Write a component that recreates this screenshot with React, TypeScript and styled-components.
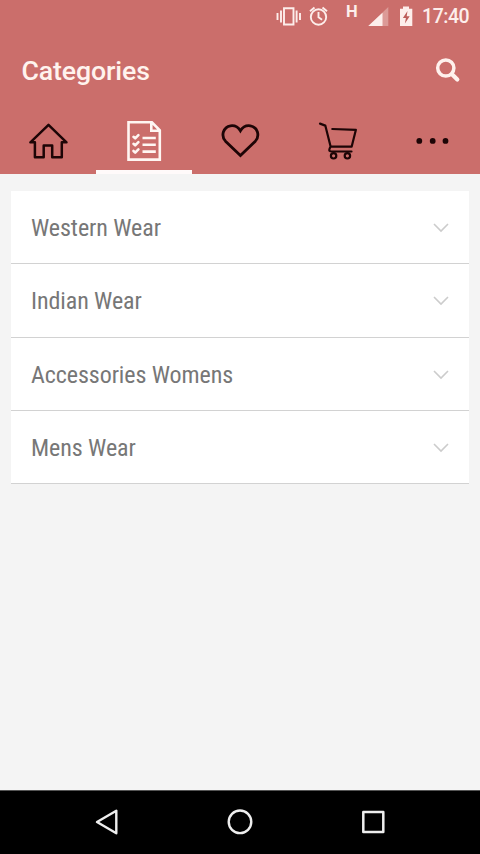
import React from "react";
import styled, { createGlobalStyle } from "styled-components";

const GlobalStyle = createGlobalStyle`
  * { box-sizing: border-box; }
  body { margin: 0; background: #f4f4f4; font-family: Roboto, "Liberation Sans", sans-serif; }
  svg { display: block; flex: none; }
`;

const Screen = styled.div`
  width: 480px;
  height: 854px;
  display: flex;
  flex-direction: column;
  overflow: hidden;
  background: #f4f4f4;
`;

const Header = styled.header`
  height: 174px;
  flex: none;
  background: #cb6e6b;
`;

const StatusBar = styled.div`
  height: 34px;
  display: flex;
  justify-content: flex-end;
  padding-right: 11px;
  color: #fdeeeb;
`;

const Clock = styled.span`
  width: 47px;
  margin-left: 9px;
  font-size: 19.5px;
  font-weight: 500;
  line-height: 34px;
  white-space: nowrap;
  letter-spacing: -0.45px;
`;

const NetworkType = styled.span`
  width: 12px;
  margin-left: 16px;
  font-size: 16.5px;
  line-height: 24px;
  font-weight: 700;
`;

const TitleBar = styled.div`
  height: 74px;
  display: flex;
  align-items: center;
  justify-content: space-between;
  padding: 0 19px 0 21.5px;
`;

const Title = styled.h1`
  margin: 0;
  font-size: 26.7px;
  font-weight: 500;
  letter-spacing: -0.12px;
  line-height: 32px;
  color: #fff3ee;
`;

const SearchButton = styled.button`
  border: 0;
  padding: 0;
  background: none;
`;

const Tabs = styled.nav`
  height: 66px;
  display: grid;
  grid-template-columns: repeat(5, 96px);
`;

const Tab = styled.button<{ $active?: boolean }>`
  height: 66px;
  padding: 0;
  border: 0;
  background: none;
  color: ${(p) => (p.$active ? "#fff6f2" : "#1d0506")};
  box-shadow: ${(p) => (p.$active ? "inset 0 -4px #fffafa" : "none")};
`;

const CategoryList = styled.main`
  flex: 1;
  padding: 17px 11px 0;
`;

const CategoryRow = styled.div`
  height: 73.3px;
  display: flex;
  align-items: center;
  justify-content: space-between;
  padding: 2px 20px 0;
  background: #fff;
  border-bottom: 1px solid #d2d2d2;
`;

const CategoryName = styled.span`
  font-family: "Roboto Condensed", Roboto, sans-serif;
  font-stretch: 75%;
  font-size: 24px;
  letter-spacing: -0.08px;
  line-height: 30px;
  color: #777;
`;

const NavBar = styled.footer`
  height: 64px;
  flex: none;
  display: flex;
  align-items: center;
  justify-content: space-between;
  padding: 0 91px 1px;
  background: #000;
  border-top: 1px solid #555;
`;

const categories = ["Western Wear", "Indian Wear", "Accessories Womens", "Mens Wear"];

const TabIcon = ({ x, width = 2.2, children }: { x: number; width?: number; children: React.ReactNode }) => (
  <svg width="96" height="66" viewBox={`${x} 108 96 66`} fill="none" stroke="currentColor" strokeWidth={width} strokeLinejoin="round" strokeLinecap="round">
    {children}
  </svg>
);

export default function App() {
  return (
    <>
      <GlobalStyle />
      <Screen>
        <Header>
          <StatusBar>
            <svg width="26" height="34" viewBox="276 0 26 34" fill="none" stroke="currentColor" strokeWidth="1.9">
              <path d="M284 8.3h9.5v16.2H284zM281 10.5v12M296.6 10.5v12M277.5 13v7M300 13v7" />
            </svg>
            <svg width="28" height="34" viewBox="302 0 28 34" fill="none" stroke="currentColor" strokeWidth="1.9">
              <circle cx="318.5" cy="17" r="7.7" />
              <path d="M318.5 12v5.3l3.6 2.5M310 11.2l4.5-3.8M322.5 7.4l4.5 3.8" />
            </svg>
            <NetworkType>H</NetworkType>
            <svg width="31" height="34" viewBox="358 0 31 34" fill="currentColor">
              <path opacity=".35" d="M388.3 7v19h-20z" />
              <path d="M382.5 12.7V26h-14.2z" />
            </svg>
            <svg width="24" height="34" viewBox="389 0 24 34">
              <path fill="currentColor" d="M400 8.7h3V6.5h6v2.2h3.3V26H400z" />
              <path fill="#bd5c59" d="M407.5 11l-4.6 7h3l-1 5.6 4.8-7.3h-3z" />
            </svg>
            <Clock>17:40</Clock>
          </StatusBar>
          <TitleBar>
            <Title>Categories</Title>
            <SearchButton aria-label="Search">
              <svg width="26" height="26" viewBox="435 58 26 26" fill="none" stroke="#fff1ed" strokeLinecap="round">
                <circle cx="445.8" cy="68" r="8.1" strokeWidth="3.5" />
                <path d="M452 74.2l5.3 5.3" strokeWidth="4.2" />
              </svg>
            </SearchButton>
          </TitleBar>
          <Tabs>
            <Tab aria-label="Home">
              <TabIcon x={0} width={2.5}>
                <path d="M48.5 124.9L30.4 142.3h4.5v14.9h8.8v-11.6h8.5v11.6h9.6v-14.9h4.7z" />
              </TabIcon>
            </Tab>
            <Tab $active aria-label="Categories">
              <TabIcon x={96} width={2.6}>
                <path strokeLinejoin="miter" d="M128.5 122.3h23.4l7.9 8v29.3h-31.3zM151.3 122.5v8.3h8.3" />
                <path strokeLinecap="butt" d="M142.5 138h13.3M142.5 144.7h13.3M142.5 151.6h13.3" />
                <path d="M133.5 136.8l1.7 1.6 3.2-3.2M133.5 143.8l1.7 1.6 3.2-3.2M133.5 151l1.7 1.6 3.2-3.2" />
              </TabIcon>
            </Tab>
            <Tab aria-label="Wishlist">
              <TabIcon x={192} width={2.8}>
                <path strokeLinejoin="miter" d="M240.4 155.5L225.5 141.2C220.5 135.5 223.4 127 230.5 125.8c4.4-.6 7.8 1.5 9.9 5 2.1-3.5 5.5-5.6 9.9-5 7.1 1.2 10 9.7 5 15.4z" />
              </TabIcon>
            </Tab>
            <Tab aria-label="Cart">
              <TabIcon x={288} width={2.2}>
                <path d="M320 123.6l5.3 2 5.3 21H351.7l4.2-16.8-23.6-.8M330.5 146.7c-2.6 4.6-.6 4.8 2 4.8h19" />
                <circle cx="333.6" cy="155.8" r="2.7" />
                <circle cx="347.4" cy="155.8" r="2.7" />
              </TabIcon>
            </Tab>
            <Tab aria-label="More">
              <TabIcon x={384}>
                <g fill="currentColor" stroke="none">
                  <circle cx="419.3" cy="140.9" r="2.9" />
                  <circle cx="432.7" cy="140.9" r="2.9" />
                  <circle cx="445.5" cy="140.9" r="2.9" />
                </g>
              </TabIcon>
            </Tab>
          </Tabs>
        </Header>
        <CategoryList>
          {categories.map((name) => (
            <CategoryRow key={name}>
              <CategoryName>{name}</CategoryName>
              <svg width="16" height="10" viewBox="0 0 16 10" fill="none" stroke="#ccc" strokeWidth="1.6">
                <path d="M1 1l7 7 7-7" />
              </svg>
            </CategoryRow>
          ))}
        </CategoryList>
        <NavBar>
          <svg width="32" height="32" viewBox="91 806 32 32" fill="none" stroke="#eee" strokeWidth="2.4" strokeLinejoin="round">
            <path d="M116.3 810.7v22.5L97 822z" />
          </svg>
          <svg width="32" height="32" viewBox="224 806 32 32" fill="none" stroke="#eee" strokeWidth="2.4">
            <circle cx="240" cy="821.8" r="11.3" />
          </svg>
          <svg width="32" height="32" viewBox="357 806 32 32" fill="none" stroke="#eee" strokeWidth="2.5" strokeLinejoin="round">
            <path d="M363.3 812h20v20h-20z" />
          </svg>
        </NavBar>
      </Screen>
    </>
  );
}
